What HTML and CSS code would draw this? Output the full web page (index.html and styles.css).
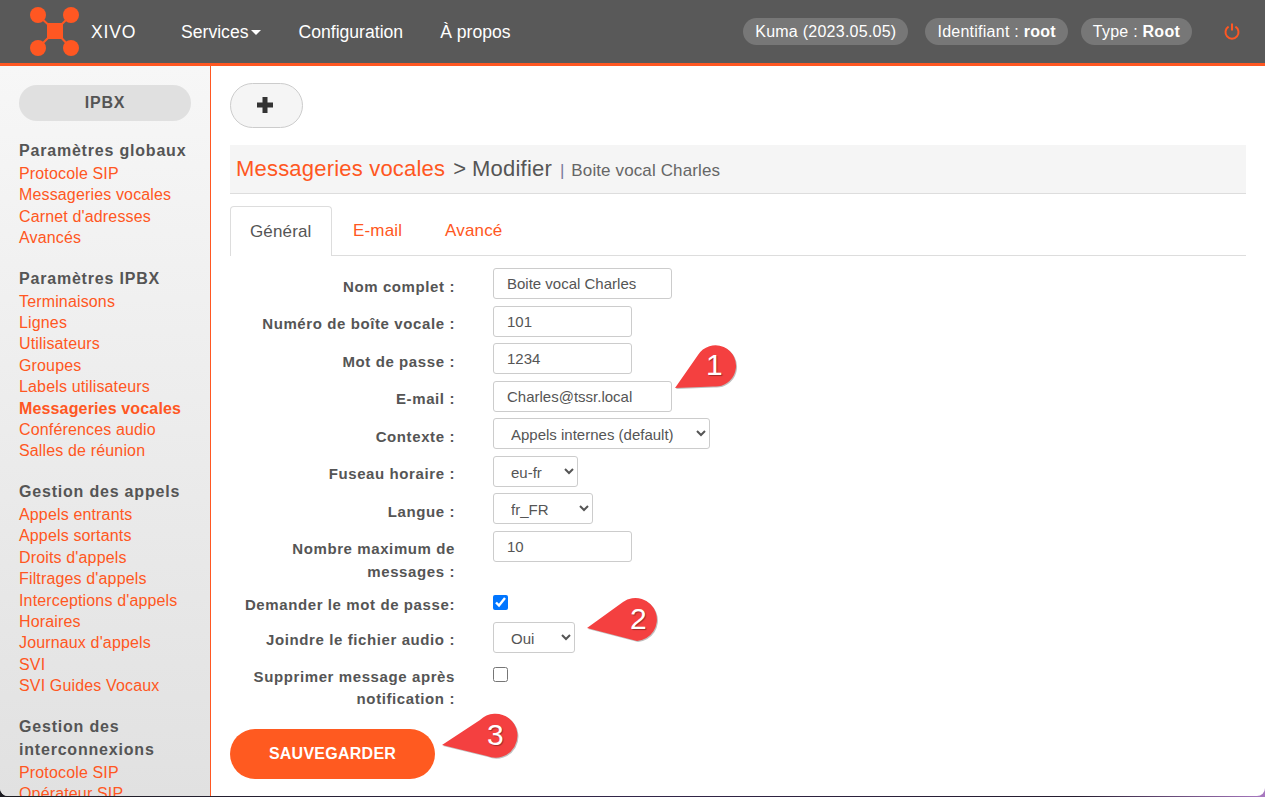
FILE: index.html
```html
<!DOCTYPE html>
<html>
<head>
  <title>XIVO</title>
  <link rel="stylesheet" href="styles.css">
</head>
<body>
  <div class="navbar">
    <div class="brand">
      <svg class="logo" width="50" height="50" viewBox="0 0 50 50">
        <path d="M8 8L25 24M41 8L25 24M8 41L25 24M41 41L25 24" stroke="#ff5722" stroke-width="2"/>
        <circle cx="8" cy="8" r="8" fill="#ff5722"/>
        <circle cx="41" cy="8" r="8" fill="#ff5722"/>
        <circle cx="8" cy="41" r="8" fill="#ff5722"/>
        <circle cx="41" cy="41" r="8" fill="#ff5722"/>
        <rect x="17" y="16" width="16" height="16" fill="#ff5722"/>
      </svg>
      <span class="brand-name">XIVO</span>
    </div>
    <div class="nav-links">
      <a class="nav-link">Services<span class="caret"></span></a>
      <a class="nav-link">Configuration</a>
      <a class="nav-link">À propos</a>
    </div>
    <div class="nav-info">
      <span class="pill pill-version">Kuma (2023.05.05)</span>
      <span class="pill">Identifiant : <b>root</b></span>
      <span class="pill">Type : <b>Root</b></span>
      <svg class="power" width="16" height="17" viewBox="0 0 16 17">
        <path d="M4.6 3.600a6.500 6.500 0 1 0 6.800 0M8 .5v7" fill="none" stroke="#ff5722" stroke-width="2"/>
      </svg>
    </div>
  </div>

  <div class="page">
    <div class="sidebar">
      <div class="side-title">IPBX</div>

      <h4>Paramètres globaux</h4>
      <a>Protocole SIP</a>
      <a>Messageries vocales</a>
      <a>Carnet d'adresses</a>
      <a>Avancés</a>

      <h4>Paramètres IPBX</h4>
      <a>Terminaisons</a>
      <a>Lignes</a>
      <a>Utilisateurs</a>
      <a>Groupes</a>
      <a>Labels utilisateurs</a>
      <a class="current">Messageries vocales</a>
      <a>Conférences audio</a>
      <a>Salles de réunion</a>

      <h4>Gestion des appels</h4>
      <a>Appels entrants</a>
      <a>Appels sortants</a>
      <a>Droits d'appels</a>
      <a>Filtrages d'appels</a>
      <a>Interceptions d'appels</a>
      <a>Horaires</a>
      <a>Journaux d'appels</a>
      <a>SVI</a>
      <a>SVI Guides Vocaux</a>

      <h4>Gestion des interconnexions</h4>
      <a>Protocole SIP</a>
      <a>Opérateur SIP</a>
    </div>

    <div class="content">
      <button class="add-button">
        <svg width="16" height="16" viewBox="0 0 16 16"><path d="M5.500 0h5v5.500H16v5h-5.500V16h-5v-5.500H0v-5h5.500z" fill="#333"/></svg>
      </button>

      <div class="heading">
        <a class="heading-link">Messageries vocales</a>
        <span class="heading-sep">&gt;</span>
        <span class="heading-action">Modifier</span>
        <span class="heading-name"><span class="bar">|</span> Boite vocal Charles</span>
      </div>

      <div class="tabs">
        <a class="tab active">Général</a>
        <a class="tab">E-mail</a>
        <a class="tab">Avancé</a>
      </div>

      <div class="form">
        <div class="row">
          <label>Nom complet :</label>
          <input class="w-179" type="text" value="Boite vocal Charles">
        </div>
        <div class="row">
          <label>Numéro de boîte vocale :</label>
          <input class="w-139" type="text" value="101">
        </div>
        <div class="row">
          <label>Mot de passe :</label>
          <input class="w-139" type="text" value="1234">
        </div>
        <div class="row">
          <label>E-mail :</label>
          <input class="w-179" type="text" value="Charles@tssr.local">
        </div>
        <div class="row">
          <label>Contexte :</label>
          <select class="w-217"><option>Appels internes (default)</option></select>
        </div>
        <div class="row">
          <label>Fuseau horaire :</label>
          <select class="w-85"><option>eu-fr</option></select>
        </div>
        <div class="row">
          <label>Langue :</label>
          <select class="w-100"><option>fr_FR</option></select>
        </div>
        <div class="row">
          <label>Nombre maximum de messages :</label>
          <input class="w-139" type="text" value="10">
        </div>
        <div class="row row-check">
          <label>Demander le mot de passe:</label>
          <input type="checkbox" checked>
        </div>
        <div class="row">
          <label>Joindre le fichier audio :</label>
          <select class="w-82"><option>Oui</option></select>
        </div>
        <div class="row row-check row-check-last">
          <label>Supprimer message après notification :</label>
          <input type="checkbox">
        </div>
        <button class="save-button">SAUVEGARDER</button>
      </div>
    </div>
  </div>

  <!-- numbered annotations drawn over the screenshot -->
  <div class="callout callout-1">
    <svg width="70" height="52" viewBox="0 0 70 52"><path d="M5 48L28 15A20.600 20.600 0 1 1 43 46.400Z" fill="#f44040"/></svg>
    <span class="callout-num">1</span>
  </div>
  <div class="callout callout-2">
    <svg width="80" height="50" viewBox="0 0 80 50"><path d="M3 33L39 7A21.500 21.500 0 1 1 53 46Z" fill="#f44040"/></svg>
    <span class="callout-num">2</span>
  </div>
  <div class="callout callout-3">
    <svg width="80" height="50" viewBox="0 0 80 50"><path d="M2 35L40 10A22 22 0 1 1 47 46Z" fill="#f44040"/></svg>
    <span class="callout-num">3</span>
  </div>
</body>
</html>
```

FILE: styles.css
```css
* {
  box-sizing: border-box;
}

html {
  height: 100%;
  background: linear-gradient(to right, #1c1c22, #33264a 50%, #241c2e 85%, #a878c0);
}

body {
  position: relative;
  height: calc(100% - 1px);
  margin: 0;
  font-family: "Liberation Sans", Arial, sans-serif;
  font-size: 16px;
  color: #555;
  background-color: #fff;
  border-radius: 0 0 8px 8px;
  overflow: hidden;
}

.navbar {
  display: flex;
  align-items: center;
  height: 66px;
  background-color: #595959;
  border-bottom: 3px solid #ff5722;
  padding-left: 30px;
}

.brand {
  display: flex;
  align-items: center;
  width: 151px;
}

.brand-name {
  margin-left: 11px;
  padding-top: 2px;
  color: #fff;
  font-size: 17.6px;
  letter-spacing: 0.8px;
}

.nav-links {
  display: flex;
  gap: 37px;
  padding-top: 1px;
}

.nav-link {
  color: #fff;
  font-size: 17.6px;
}

.caret {
  display: inline-block;
  margin-left: 3px;
  vertical-align: middle;
  border-top: 5px solid #fff;
  border-left: 5px solid transparent;
  border-right: 5px solid transparent;
}

.nav-info {
  display: flex;
  align-items: center;
  margin-left: auto;
  gap: 13px;
  padding-right: 25px;
}

.pill {
  height: 27px;
  line-height: 27px;
  padding: 0 12px;
  border-radius: 14px;
  background-color: #777;
  color: #fff;
  font-size: 16px;
  letter-spacing: 0.25px;
}

.pill-version {
  margin-right: 4px;
}

.power {
  margin-left: 19px;
}

.page {
  display: flex;
  height: calc(100% - 66px);
  overflow: hidden;
}

.sidebar {
  width: 211px;
  flex-shrink: 0;
  padding: 19px 19px 0 19px;
  background: linear-gradient(to bottom, #f7f7f7, #e1e1e1);
  border-right: 1px solid #ff5722;
  overflow: hidden;
}

.side-title {
  height: 36px;
  line-height: 35px;
  margin-bottom: 18px;
  text-align: center;
  font-weight: bold;
  font-size: 16px;
  letter-spacing: 0.8px;
  background-color: #e0e0e0;
  border-radius: 18px;
}

.sidebar h4 {
  margin: 18px 0 1px;
  font-size: 16px;
  line-height: 23px;
  letter-spacing: 0.8px;
  color: #555;
}

.sidebar h4:first-of-type {
  margin-top: 0;
}

.sidebar a {
  display: block;
  color: #ff5722;
  font-size: 16px;
  line-height: 21.4px;
  letter-spacing: 0.15px;
  white-space: nowrap;
}

.sidebar a.current {
  font-weight: bold;
}

.content {
  flex: 1;
  padding: 17px 19px 0 19px;
}

.add-button {
  display: block;
  width: 73px;
  height: 45px;
  padding: 2px 4px 0 0;
  background-color: #f5f5f5;
  border: 1px solid #ccc;
  border-radius: 23px;
}

.heading {
  display: flex;
  align-items: baseline;
  height: 49px;
  margin-top: 17px;
  padding: 11px 6px 0;
  background-color: #f5f5f5;
  border-bottom: 1px solid #ddd;
  white-space: pre;
}

.heading-link {
  color: #ff5722;
  font-size: 22px;
  letter-spacing: 0.2px;
}

.heading-sep {
  margin-left: 8px;
  font-size: 22px;
}

.heading-action {
  margin-left: 6px;
  font-size: 22px;
  letter-spacing: 0.2px;
}

.heading-name {
  margin-left: 8px;
  font-size: 17px;
  color: #666;
  letter-spacing: 0.12px;
}

.bar {
  margin-right: 2px;
  color: #7a7a9a;
}

.tabs {
  display: flex;
  height: 62px;
  padding-top: 12px;
  border-bottom: 1px solid #ddd;
}

.tab {
  height: 50px;
  line-height: 50px;
  padding: 0 21.5px;
  color: #ff5722;
  font-size: 17px;
  letter-spacing: 0.15px;
}

.tab.active {
  padding: 0 19px;
  color: #555;
  background-color: #fff;
  border: 1px solid #ddd;
  border-bottom: none;
  border-radius: 4px 4px 0 0;
}

.form {
  padding-top: 12px;
}

.row {
  display: flex;
  align-items: flex-start;
  margin-bottom: 6.5px;
}

.row label {
  width: 225px;
  margin-right: 38px;
  padding-top: 7.5px;
  text-align: right;
  font-weight: bold;
  font-size: 15px;
  line-height: 22.5px;
  letter-spacing: 0.6px;
  color: #555;
}

.row input[type="text"],
.row select {
  height: 31px;
  padding: 0 13px;
  font-family: "Liberation Sans", Arial, sans-serif;
  font-size: 15px;
  color: #555;
  background-color: #fff;
  border: 1px solid #ccc;
  border-radius: 3px;
}

.row select {
  padding-top: 2px;
}

.row input[type="checkbox"] {
  width: 15px;
  height: 15px;
  margin: 1px 0 0;
}

.row-check {
  margin-top: 10.5px;
  margin-bottom: 5.5px;
}

.row-check label {
  padding-top: 0;
}

.row-check-last {
  margin-top: 13px;
  margin-bottom: 0;
}

.w-179 { width: 179px; }
.w-139 { width: 139px; }
.w-217 { width: 217px; }
.w-85 { width: 85px; }
.w-100 { width: 100px; }
.w-82 { width: 82px; }

.save-button {
  display: block;
  width: 205px;
  height: 50px;
  margin-top: 18px;
  border: none;
  border-radius: 25px;
  background-color: #ff5a20;
  color: #fff;
  font-family: "Liberation Sans", Arial, sans-serif;
  font-weight: bold;
  font-size: 16px;
  letter-spacing: 0.25px;
}

.callout {
  position: absolute;
  line-height: 0;
}

.callout svg {
  filter: drop-shadow(1px 1px 0 rgba(0, 0, 0, 0.25));
}

.callout-1 { left: 670px; top: 340px; }
.callout-2 { left: 584px; top: 595px; }
.callout-3 { left: 440px; top: 710px; }

.callout-num {
  position: absolute;
  color: #fff;
  font-size: 30px;
  line-height: 30px;
  text-shadow: 1px 1px 1px rgba(0, 0, 0, 0.35);
}

.callout-1 .callout-num { left: 36px; top: 10px; }
.callout-2 .callout-num { left: 46px; top: 9px; }
.callout-3 .callout-num { left: 47px; top: 10px; }
```
